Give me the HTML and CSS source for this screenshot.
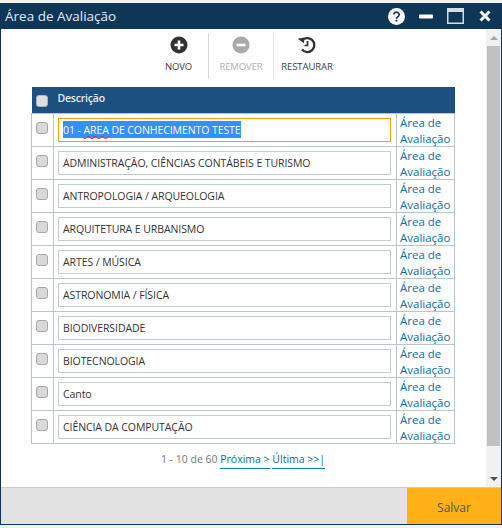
FILE: index.html
```html
<!DOCTYPE html>
<html lang="pt-BR">
<head>
<meta charset="utf-8">
<title>Área de Avaliação</title>
<link rel="stylesheet" href="styles.css">
</head>
<body>
<div class="window">
  <header class="titlebar">
    <span class="title">Área de Avaliação</span>
    <div class="win-icons">
      <svg class="ic-help" width="17" height="17" viewBox="0 0 18 18"><circle cx="9" cy="9" r="9" fill="#fff"/><path d="M6.2 7a2.8 2.6 0 1 1 4.4 2.1c-1 .7-1.6 1.1-1.6 2.2" fill="none" stroke="#0f3557" stroke-width="1.8"/><rect x="8" y="12.4" width="2" height="2" fill="#0f3557"/></svg>
      <svg class="ic-min" width="14" height="5" viewBox="0 0 14 5"><rect width="14" height="4" y=".5" rx="1" fill="#fff"/></svg>
      <svg class="ic-max" width="17" height="16" viewBox="0 0 17 16"><rect x=".75" y=".75" width="15.5" height="14.5" fill="none" stroke="#d5dde4" stroke-width="1.5"/><rect x="1" y="1" width="15" height="3" fill="#d5dde4"/></svg>
      <svg class="ic-close" width="12" height="12" viewBox="0 0 12 12"><path d="M1.5 1.5l9 9M10.5 1.5l-9 9" stroke="#fff" stroke-width="3"/></svg>
    </div>
  </header>
  <div class="middle">
    <main class="content">
      <div class="toolbar">
        <div class="tool tool-novo">
          <svg width="18" height="18" viewBox="0 0 18 18"><circle cx="9" cy="9" r="8.5" fill="#333"/><path d="M9 4.5v9M4.5 9h9" stroke="#fff" stroke-width="2.6"/></svg>
          <span>NOVO</span>
        </div>
        <div class="tool tool-rem disabled">
          <svg width="18" height="18" viewBox="0 0 18 18"><circle cx="9" cy="9" r="8.5" fill="#aaa"/><path d="M4.5 9h9" stroke="#fff" stroke-width="2.6"/></svg>
          <span>REMOVER</span>
        </div>
        <div class="tool tool-res">
          <svg width="20" height="18" viewBox="0 0 20 18"><path d="M4.9 4.6A7 7 0 1 1 5 13.6" fill="none" stroke="#333" stroke-width="2.3"/><path d="M1 2.2l6.8 0-1.4 5.4z" fill="#333" transform="rotate(-10 4 4)"/><path d="M10.5 5v4.5H7.5" fill="none" stroke="#333" stroke-width="1.7"/></svg>
          <span>RESTAURAR</span>
        </div>
      </div>
      <table class="grid">
        <colgroup><col class="col-check"><col class="col-desc"><col class="col-link"></colgroup>
        <thead>
          <tr><th class="c-check"><span class="check"></span></th><th class="c-desc" colspan="2">Descrição</th></tr>
        </thead>
        <tbody>
          <tr><td class="c-check"><span class="check"></span></td><td class="c-desc"><div class="field focus"><span class="sel"><span>01 - </span><span class="spell">AREA</span><span> DE CONHECIMENTO TESTE</span></span></div></td><td class="c-link"><a href="#">Área de Avaliação</a></td></tr>
          <tr><td class="c-check"><span class="check"></span></td><td class="c-desc"><div class="field">ADMINISTRAÇÃO, CIÊNCIAS CONTÁBEIS E TURISMO</div></td><td class="c-link"><a href="#">Área de Avaliação</a></td></tr>
          <tr><td class="c-check"><span class="check"></span></td><td class="c-desc"><div class="field">ANTROPOLOGIA / ARQUEOLOGIA</div></td><td class="c-link"><a href="#">Área de Avaliação</a></td></tr>
          <tr><td class="c-check"><span class="check"></span></td><td class="c-desc"><div class="field">ARQUITETURA E URBANISMO</div></td><td class="c-link"><a href="#">Área de Avaliação</a></td></tr>
          <tr><td class="c-check"><span class="check"></span></td><td class="c-desc"><div class="field">ARTES / MÚSICA</div></td><td class="c-link"><a href="#">Área de Avaliação</a></td></tr>
          <tr><td class="c-check"><span class="check"></span></td><td class="c-desc"><div class="field">ASTRONOMIA / FÍSICA</div></td><td class="c-link"><a href="#">Área de Avaliação</a></td></tr>
          <tr><td class="c-check"><span class="check"></span></td><td class="c-desc"><div class="field">BIODIVERSIDADE</div></td><td class="c-link"><a href="#">Área de Avaliação</a></td></tr>
          <tr><td class="c-check"><span class="check"></span></td><td class="c-desc"><div class="field">BIOTECNOLOGIA</div></td><td class="c-link"><a href="#">Área de Avaliação</a></td></tr>
          <tr><td class="c-check"><span class="check"></span></td><td class="c-desc"><div class="field">Canto</div></td><td class="c-link"><a href="#">Área de Avaliação</a></td></tr>
          <tr><td class="c-check"><span class="check"></span></td><td class="c-desc"><div class="field">CIÊNCIA DA COMPUTAÇÃO</div></td><td class="c-link"><a href="#">Área de Avaliação</a></td></tr>
        </tbody>
      </table>
      <div class="pager">1 - 10 de 60 <a href="#">Próxima &gt;</a> <a href="#">Última &gt;&gt;|</a></div>
    </main>
    <div class="scrollbar">
      <span class="arrow up"></span>
      <div class="track"><div class="thumb"></div></div>
      <span class="arrow down"></span>
    </div>
  </div>
  <footer class="footer"><button class="save">Salvar</button></footer>
</div>
</body>
</html>
```
FILE: styles.css
```css
* { box-sizing: border-box; }
html, body { margin: 0; height: 100%; }
body {
  background: #f1f1f1;
  padding-top: 3px;
  font-family: "Open Sans", "Noto Sans", sans-serif;
  color: #333;
}
.window {
  width: 502px;
  height: 522px;
  display: flex;
  flex-direction: column;
  background: #fff;
  border: solid #0f3557;
  border-width: 0 1px 1px 1px;
}
.titlebar {
  height: 26px;
  flex: none;
  margin: 0 -1px;
  padding: 0 11px 0 5px;
  background: #0f3557;
  display: flex;
  align-items: center;
  justify-content: space-between;
}
.title { color: #e4eaf0; font-size: 13.5px; line-height: 26px; }
.win-icons { display: flex; align-items: center; }
.ic-help { margin-right: 14px; }
.ic-min { margin-right: 14px; }
.ic-max { margin-right: 15px; }
.middle { flex: 1; display: flex; min-height: 0; }
.content { flex: 1; min-width: 0; padding: 4px 0 0 30px; }
.toolbar {
  height: 54px;
  width: 425px;
  display: flex;
  padding-left: 118px;
}
.tool {
  display: flex;
  flex-direction: column;
  align-items: center;
  height: 46px;
  padding-top: 3px;
  font-size: 9.5px;
  letter-spacing: -0.1px;
  color: #444;
}
.tool span { margin-top: 6px; line-height: 13px; }
.tool-novo { width: 60px; border-right: 1px solid #d8d8d8; }
.tool-rem { width: 65px; border-right: 1px solid #e8e8e8; }
.tool-res { width: 66px; }
.disabled { color: #b4b4b4; }
.grid {
  width: 424px;
  border-collapse: collapse;
  table-layout: fixed;
}
.col-check { width: 22px; }
.col-link { width: 58px; }
.grid th {
  height: 26px;
  background: #1c5080;
  color: #e6edf3;
  font-size: 10.5px;
  font-weight: 600;
  text-align: left;
  padding: 0 0 3px 4px;
  letter-spacing: -0.2px;
}
.grid th.c-check { padding: 2px 0 0 4px; }
.grid td { height: 33px; border: 1px solid #b8c7ce; padding: 0; vertical-align: top; }
.grid td.c-check { padding: 8px 0 0 4px; }
.grid td.c-desc { padding: 4px 5px 0 4px; }
.grid td.c-link { padding: 1px 0 0 3px; line-height: 16px; }
.check {
  display: block;
  width: 12px;
  height: 12px;
  background: #d9d9d9;
  border: 1px solid #a9a9a9;
  border-radius: 3px;
}
.grid th .check { background: #dfdfdf; border-color: #b5b5b5; }
.field {
  height: 24px;
  border: 1px solid #c4cdcd;
  padding: 0 4px;
  font-size: 10.5px;
  line-height: 22px;
  letter-spacing: -0.08px;
  color: #333;
  white-space: nowrap;
  overflow: hidden;
}
.field.focus { border-color: #f0a30a; }
.sel { background: #3390ff; color: #fff; display: inline-block; height: 17px; line-height: 18px; margin-top: 2px; vertical-align: top; }
.spell { text-decoration: underline wavy #d22; text-decoration-thickness: 1px; }
.c-link a { color: #0a6fa8; font-size: 11.5px; text-decoration: none; display: block; height: 31px; }
.pager {
  width: 424px;
  margin-top: 7px;
  text-align: center;
  font-size: 10.5px;
  line-height: 17px;
  color: #777;
}
.pager a { color: #0a6fa8; text-decoration: none; border-bottom: 1px solid #0a7fbf; padding-bottom: 2px; }
.scrollbar {
  width: 15px;
  flex: none;
  background: #f1f1f1;
  display: flex;
  flex-direction: column;
  align-items: center;
}
.track { flex: 1; width: 100%; padding: 0 0 31px; }
.thumb { height: 100%; background: #c1c1c1; width: 13px; margin: 0 auto; }
.arrow { width: 0; height: 0; border-left: 4px solid transparent; border-right: 4px solid transparent; flex: none; }
.arrow.up { border-bottom: 4px solid #a3a3a3; margin: 7px 0 6px; }
.arrow.down { border-top: 4px solid #505050; margin: 0 0 6px; }
.footer {
  height: 37px;
  flex: none;
  background: #e2e2e2;
  border-top: 1px solid #ccc;
  display: flex;
  justify-content: flex-end;
}
.save {
  width: 94px;
  border: 0;
  background: #ffb115;
  color: #555;
  font-family: inherit;
  font-size: 12px;
  padding: 2px 0 0;
}
```
